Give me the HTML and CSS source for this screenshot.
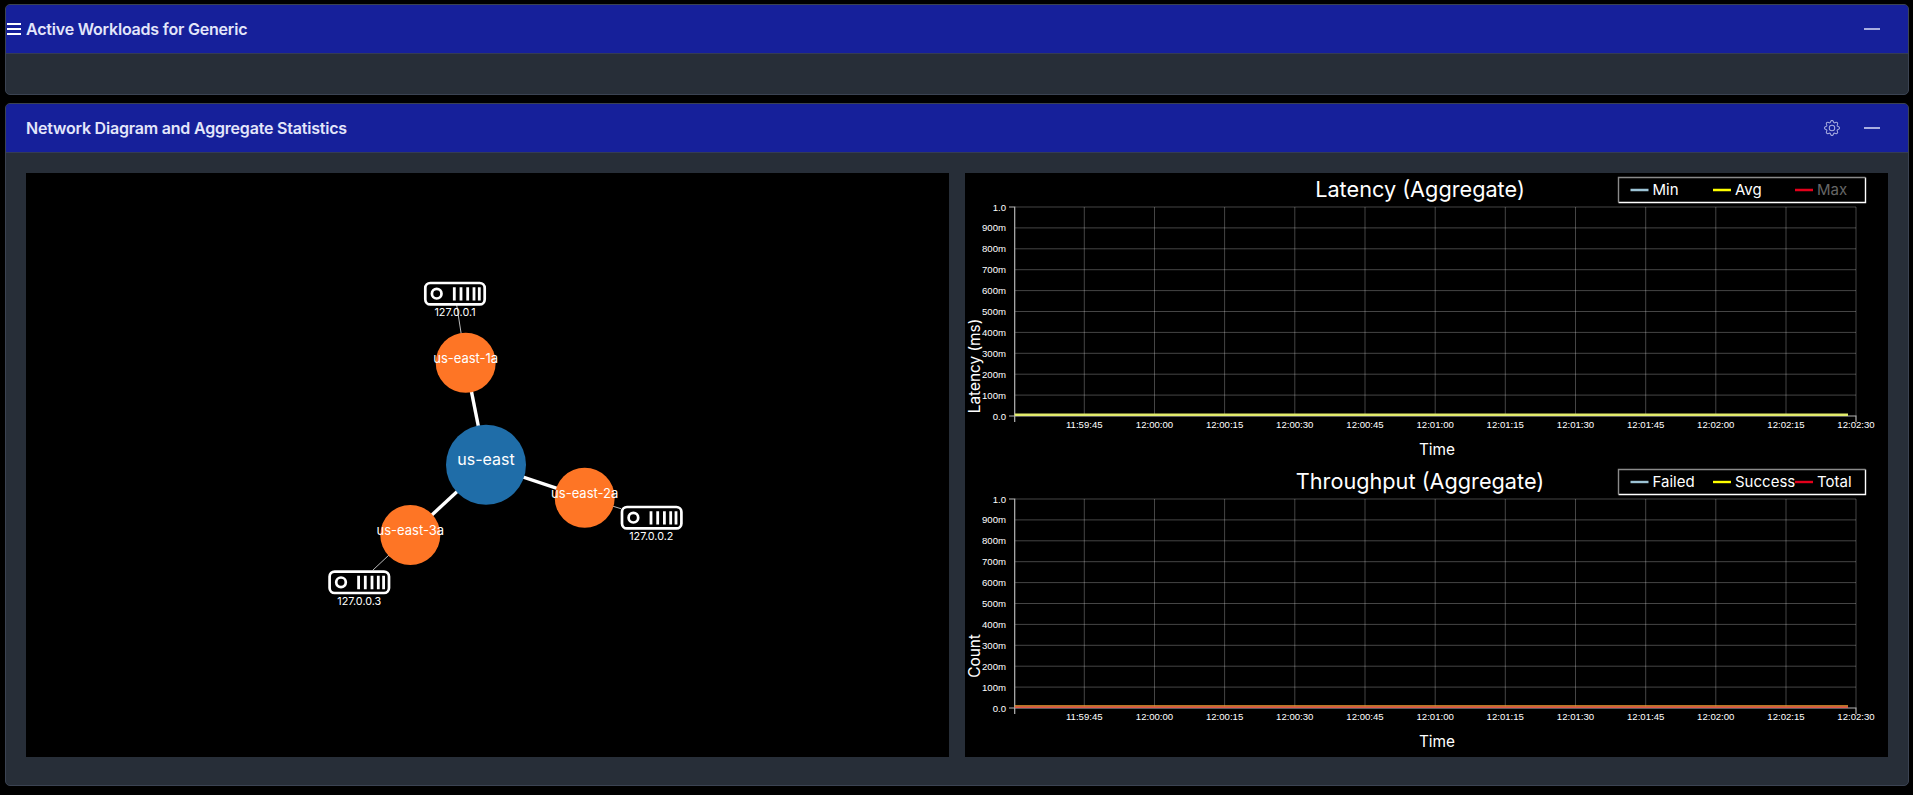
FILE: index.html
```html
<!DOCTYPE html>
<html lang="en">
<head>
    <meta charset="UTF-8">
    <meta name="viewport" content="width=device-width, initial-scale=1.0">
    <title>Active Workloads</title>
    <link rel="stylesheet" href="styles.css">
</head>
<body>

    <section class="card">
        <header class="card-header">
            <svg class="menu-icon" viewBox="0 0 16 16"><path d="M1 3h14M1 8h14M1 13h14"/></svg>
            <h2 class="card-title">Active Workloads for Generic</h2>
            <span class="minimize"></span>
        </header>
        <div class="card-body empty"></div>
    </section>

    <section class="card">
        <header class="card-header">
            <h2 class="card-title indented">Network Diagram and Aggregate Statistics</h2>
            <svg class="gear-icon" viewBox="0 0 16 16">
                <path d="M8 4.754a3.246 3.246 0 1 0 0 6.492 3.246 3.246 0 0 0 0-6.492zM5.754 8a2.246 2.246 0 1 1 4.492 0 2.246 2.246 0 0 1-4.492 0z"/>
                <path d="M9.796 1.343c-.527-1.79-3.065-1.79-3.592 0l-.094.319a.873.873 0 0 1-1.255.52l-.292-.16c-1.64-.892-3.433.902-2.54 2.541l.159.292a.873.873 0 0 1-.52 1.255l-.319.094c-1.79.527-1.79 3.065 0 3.592l.319.094a.873.873 0 0 1 .52 1.255l-.16.292c-.892 1.64.901 3.434 2.541 2.54l.292-.159a.873.873 0 0 1 1.255.52l.094.319c.527 1.79 3.065 1.79 3.592 0l.094-.319a.873.873 0 0 1 1.255-.52l.292.16c1.64.893 3.434-.902 2.54-2.541l-.159-.292a.873.873 0 0 1 .52-1.255l.319-.094c1.79-.527 1.79-3.065 0-3.592l-.319-.094a.873.873 0 0 1-.52-1.255l.16-.292c.893-1.64-.902-3.433-2.541-2.54l-.292.159a.873.873 0 0 1-1.255-.52l-.094-.319zm-2.633.283c.246-.835 1.428-.835 1.674 0l.094.319a1.873 1.873 0 0 0 2.693 1.115l.291-.16c.764-.415 1.6.42 1.184 1.185l-.159.292a1.873 1.873 0 0 0 1.116 2.692l.318.094c.835.246.835 1.428 0 1.674l-.319.094a1.873 1.873 0 0 0-1.115 2.693l.16.291c.415.764-.42 1.6-1.185 1.184l-.291-.159a1.873 1.873 0 0 0-2.693 1.116l-.094.318c-.246.835-1.428.835-1.674 0l-.094-.319a1.873 1.873 0 0 0-2.692-1.115l-.292.16c-.764.415-1.6-.42-1.184-1.185l.159-.291A1.873 1.873 0 0 0 1.945 8.93l-.319-.094c-.835-.246-.835-1.428 0-1.674l.319-.094A1.873 1.873 0 0 0 3.06 4.377l-.16-.292c-.415-.764.42-1.6 1.185-1.184l.292.159a1.873 1.873 0 0 0 2.692-1.115l.094-.319z"/>
            </svg>
            <span class="minimize"></span>
        </header>
        <div class="card-body panels">

            <div class="panel">
                <svg class="diagram" width="923" height="584" viewBox="0 0 923 584">
                    <defs>
                        <g id="server">
                            <rect class="server-box" x="1.3" y="1.3" width="59.4" height="21.4" rx="5"/>
                            <circle class="server-box" cx="12.7" cy="12" r="4.8"/>
                            <path class="server-bars" d="M30.3 5.5v13.4M37 5.5v13.4M43.7 5.5v13.4M50 5.5v13.4M55.3 5.5v13.4"/>
                        </g>
                    </defs>

                    <line class="link" x1="460" y1="291.7" x2="439.7" y2="189.7"/>
                    <line class="link" x1="460" y1="291.7" x2="558.7" y2="324.7"/>
                    <line class="link" x1="460" y1="291.7" x2="384.3" y2="362"/>
                    <line class="link-thin" x1="430.7" y1="132" x2="439.7" y2="189.7"/>
                    <line class="link-thin" x1="558.7" y1="324.7" x2="595" y2="335.7"/>
                    <line class="link-thin" x1="384.3" y1="362" x2="346.7" y2="397.3"/>

                    <circle class="region" cx="460" cy="291.7" r="40"/>
                    <circle class="zone" cx="439.7" cy="189.7" r="30"/>
                    <circle class="zone" cx="558.7" cy="324.7" r="30"/>
                    <circle class="zone" cx="384.3" cy="362" r="30"/>

                    <text class="region-label" x="460" y="291.8">us-east</text>
                    <text class="zone-label" x="439.7" y="190">us-east-1a</text>
                    <text class="zone-label" x="558.7" y="325.3">us-east-2a</text>
                    <text class="zone-label" x="384.3" y="362.3">us-east-3a</text>

                    <use href="#server" x="398" y="108.7"/>
                    <use href="#server" x="594.7" y="332.7"/>
                    <use href="#server" x="302.3" y="397.3"/>
                    <text class="host-label" x="429" y="143">127.0.0.1</text>
                    <text class="host-label" x="625.3" y="367.2">127.0.0.2</text>
                    <text class="host-label" x="333.3" y="432.2">127.0.0.3</text>
                </svg>
            </div>

            <div class="panel charts">
                <svg class="chart" width="923" height="292" viewBox="0 0 923 292">
                    <defs>
                        <g id="axes">
                            <path class="grid" d="M49.7 34H891M49.7 54.9H891M49.7 75.8H891M49.7 96.7H891M49.7 117.6H891M49.7 138.5H891M49.7 159.4H891M49.7 180.3H891M49.7 201.2H891M49.7 222.1H891"/>
                            <path class="grid" d="M119.3 34V243M189.5 34V243M259.6 34V243M329.8 34V243M400 34V243M470.2 34V243M540.3 34V243M610.5 34V243M680.7 34V243M750.8 34V243M821 34V243M891 34V243"/>
                            <path class="domain" d="M44 34H49.7V243H44M49.7 249V243H891V249"/>
                            <g class="y-ticks">
                                <text x="41" y="37.5">1.0</text>
                                <text x="41" y="58.4">900m</text>
                                <text x="41" y="79.3">800m</text>
                                <text x="41" y="100.2">700m</text>
                                <text x="41" y="121.1">600m</text>
                                <text x="41" y="142">500m</text>
                                <text x="41" y="162.9">400m</text>
                                <text x="41" y="183.8">300m</text>
                                <text x="41" y="204.7">200m</text>
                                <text x="41" y="225.6">100m</text>
                                <text x="41" y="246.5">0.0</text>
                            </g>
                            <g class="x-ticks">
                                <text x="119.3" y="254.5">11:59:45</text>
                                <text x="189.5" y="254.5">12:00:00</text>
                                <text x="259.6" y="254.5">12:00:15</text>
                                <text x="329.8" y="254.5">12:00:30</text>
                                <text x="400" y="254.5">12:00:45</text>
                                <text x="470.2" y="254.5">12:01:00</text>
                                <text x="540.3" y="254.5">12:01:15</text>
                                <text x="610.5" y="254.5">12:01:30</text>
                                <text x="680.7" y="254.5">12:01:45</text>
                                <text x="750.8" y="254.5">12:02:00</text>
                                <text x="821" y="254.5">12:02:15</text>
                                <text x="891" y="254.5">12:02:30</text>
                            </g>
                            <text class="axis-label" x="472" y="282">Time</text>
                            <path class="legend-white" d="M653.5 29.5H900.5V4.5"/>
                            <path class="legend-gray" d="M653.5 29.5V4.5H900.5"/>
                            <path class="legend-blue" d="M665.5 17H683.5"/>
                            <path class="legend-yellow" d="M748 17H766"/>
                            <path class="legend-red" d="M830 17H848"/>
                        </g>
                    </defs>
                    <use href="#axes"/>
                    <path class="series-avg" d="M49.7 241.8H883"/>
                    <text class="chart-title" x="455" y="24">Latency (Aggregate)</text>
                    <text class="axis-label" transform="translate(15 193) rotate(-90)">Latency (ms)</text>
                    <text class="legend-text" x="687.5" y="22.3">Min</text>
                    <text class="legend-text" x="770" y="22.3">Avg</text>
                    <text class="legend-text muted" x="852" y="22.3">Max</text>
                </svg>

                <svg class="chart" width="923" height="292" viewBox="0 0 923 292">
                    <use href="#axes"/>
                    <path class="series-success" d="M49.7 241H883"/>
                    <path class="series-total" d="M49.7 242.2H883"/>
                    <text class="chart-title" x="455" y="24">Throughput (Aggregate)</text>
                    <text class="axis-label" transform="translate(15 191) rotate(-90)">Count</text>
                    <text class="legend-text" x="687.5" y="22.3">Failed</text>
                    <text class="legend-text" x="770" y="22.3">Success</text>
                    <text class="legend-text" x="852" y="22.3">Total</text>
                </svg>
            </div>

        </div>
    </section>

</body>
</html>
```

FILE: styles.css
```css
* {
    box-sizing: border-box;
}

body {
    font-family: Inter, "Liberation Sans", sans-serif;
    background-color: #000;
    margin: 0;
    padding: 4px 4px 0 5px;
    overflow: hidden;
}

.card {
    background: #272e38;
    border: 1px solid #3b4352;
    border-radius: 5px;
    margin-bottom: 8px;
    overflow: hidden;
}

.card-header {
    display: flex;
    align-items: center;
    height: 49px;
    background: #16209a;
    border-bottom: 1px solid #343b55;
    padding-right: 28px;
}

.card-title {
    margin: 0;
    font-size: 16px;
    font-weight: 600;
    letter-spacing: -0.2px;
    color: #e3e6fa;
    flex: 1;
}

.card-title.indented {
    padding-left: 20px;
}

.menu-icon {
    width: 16px;
    height: 16px;
    margin: 0 4px 0 0;
    flex: none;
}

.menu-icon path {
    fill: none;
    stroke: #fff;
    stroke-width: 2;
}

.gear-icon {
    width: 16px;
    height: 16px;
    fill: #a9aee0;
    margin-right: 24px;
}

.minimize {
    width: 16px;
    height: 2px;
    background: #a9aee0;
}

.card-body.empty {
    height: 40px;
}

.panels {
    display: grid;
    grid-template-columns: 923px 923px;
    gap: 16px;
    padding: 20px 20px 28px;
}

.panel {
    background: #000;
    height: 584px;
}

.charts {
    display: flex;
    flex-direction: column;
}

.diagram,
.chart {
    display: block;
}

/* diagram */
.link {
    stroke: #fff;
    stroke-width: 3.4;
}

.link-thin {
    stroke: #bbb;
    stroke-width: 1;
}

.region {
    fill: #1f6da8;
}

.zone {
    fill: #fe7525;
}

.region-label,
.zone-label,
.host-label {
    fill: #fff;
    text-anchor: middle;
}

.region-label {
    font-size: 16px;
}

.zone-label {
    font-size: 13px;
}

.host-label {
    font-size: 10.8px;
}

.server-box {
    fill: none;
    stroke: #fff;
    stroke-width: 2.7;
}

.server-bars {
    fill: none;
    stroke: #fff;
    stroke-width: 2.8;
}

/* charts */
.grid {
    fill: none;
    stroke: #fff;
    stroke-opacity: 0.27;
    stroke-width: 1;
}

.domain {
    fill: none;
    stroke: #b5b5b5;
    stroke-width: 1.2;
}

.y-ticks text,
.x-ticks text {
    font-family: "Liberation Sans", Arial, sans-serif;
    font-size: 9.6px;
    fill: #fff;
}

.y-ticks text {
    text-anchor: end;
}

.x-ticks text {
    text-anchor: middle;
}

.axis-label {
    font-size: 15.4px;
    fill: #fff;
    text-anchor: middle;
}

.chart-title {
    font-size: 21.7px;
    fill: #fff;
    text-anchor: middle;
}

.legend-text {
    font-size: 15px;
    fill: #fff;
}

.legend-text.muted {
    fill: #666;
}

.legend-white,
.legend-gray {
    fill: none;
    stroke-width: 1.4;
}

.legend-white {
    stroke: #fff;
}

.legend-gray {
    stroke: #8a8a8a;
}

.legend-blue,
.legend-yellow,
.legend-red {
    fill: none;
    stroke-width: 2.4;
}

.legend-blue {
    stroke: #9cc3d5;
}

.legend-yellow {
    stroke: #ffff00;
}

.legend-red {
    stroke: #e3001b;
}

.series-avg,
.series-success,
.series-total {
    fill: none;
    stroke-width: 2.4;
}

.series-avg {
    stroke: #e2ec6c;
}

.series-success {
    stroke: #f0a030;
    stroke-width: 1.4;
}

.series-total {
    stroke: #e2574c;
    stroke-width: 1.4;
}
```
